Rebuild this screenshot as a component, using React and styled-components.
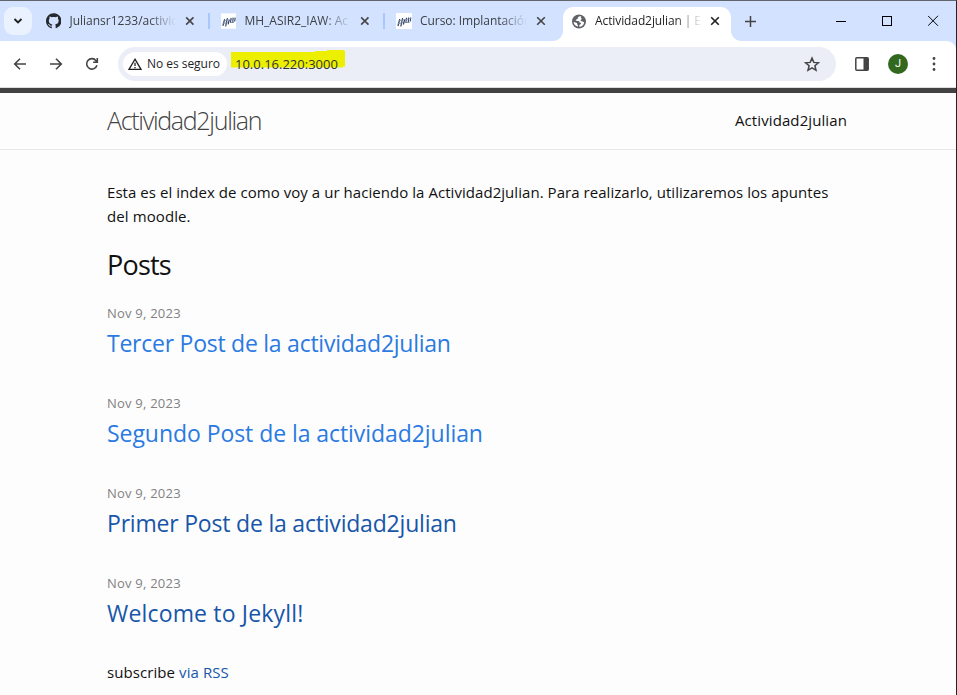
import React from 'react';
import styled, { createGlobalStyle } from 'styled-components';

const Global = createGlobalStyle`
  * { box-sizing: border-box; }
  body { margin: 0; background: #fdfdfd; overflow: hidden; }
`;

const Window = styled.div`
  width: 957px;
  height: 695px;
  display: flex;
  flex-direction: column;
  overflow: hidden;
  border-top: 1px solid #62646c;
  border-right: 1px solid #222;
  background: #fdfdfd;
  font-family: 'Open Sans', 'Noto Sans', sans-serif;
  color: #111;
`;

const TabStrip = styled.div`
  height: 40px;
  flex: none;
  display: flex;
  background: #d3e2ff;
`;

const TabSearch = styled.div`
  width: 28px;
  height: 28px;
  margin: 6px 3px 0 4px;
  border-radius: 9px;
  background: #ebf2ff;
  display: grid;
  place-items: center;
`;

const Tab = styled.div`
  width: 175px;
  height: 40px;
  padding-left: 11px;
  display: flex;
  align-items: center;
`;

const ActiveTab = styled.div`
  position: relative;
  width: 168px;
  height: 34px;
  margin: 6px 0 0 3px;
  padding: 0 0 6px 9px;
  border-radius: 10px 10px 0 0;
  background: #fff;
  display: flex;
  align-items: center;
  &::before, &::after {
    content: '';
    position: absolute;
    bottom: 0;
    width: 10px;
    height: 10px;
  }
  &::before {
    left: -10px;
    background: radial-gradient(circle at 0 0, transparent 9.5px, #fff 10.2px);
  }
  &::after {
    right: -10px;
    background: radial-gradient(circle at 100% 0, transparent 9.5px, #fff 10.2px);
  }
`;

const TabTitle = styled.span`
  flex: none;
  width: ${(p) => (p.$active ? 115 : 116)}px;
  margin: 0 0 0 8px;
  white-space: nowrap;
  font-size: 12px;
  line-height: 20px;
  letter-spacing: ${(p) => p.$track || 0}px;
  color: ${(p) => (p.$active ? '#1f1f1f' : '#3c4043')};
  mask-image: linear-gradient(90deg, #000 80px, transparent 107px);
`;

const Separator = styled.div`
  width: 2px;
  height: 16px;
  margin-left: 13px;
  background: #a8c7fa;
`;

const NewTab = styled.div`
  width: 20px;
  margin-left: 9px;
  display: flex;
  align-items: center;
  justify-content: center;
`;

const WindowControls = styled.div`
  margin-left: auto;
  display: flex;
  align-items: center;
  gap: 35px;
  padding: 0 16px 1px 0;
`;

const Toolbar = styled.div`
  height: 47px;
  flex: none;
  display: flex;
  align-items: center;
  background: #fff;
  border-bottom: 1px solid #dcdcdc;
  border-radius: 0 9px 0 0;
`;

const ToolbarBack = styled.div`
  flex: none;
  background: linear-gradient(#d3e2ff 12px, #fff 12px);
`;

const NavButtons = styled.div`
  width: 118px;
  padding-left: 12px;
  display: flex;
  gap: 20px;
`;

const Omnibox = styled.div`
  width: 718px;
  height: 34px;
  padding: 0 15px 0 5px;
  border-radius: 17px;
  background: #ebeef7;
  display: flex;
  align-items: center;
`;

const SecurityChip = styled.div`
  width: 104px;
  height: 24px;
  padding-left: 5px;
  border-radius: 12px;
  background: #fff;
  display: flex;
  align-items: center;
  gap: 5px;
  white-space: nowrap;
  font-size: 12px;
  line-height: 24px;
  letter-spacing: -0.04px;
  color: #1f1f1f;
`;

const Url = styled.div`
  position: relative;
  width: 114px;
  height: 20px;
  margin: -3px 0 0 4px;
  padding-left: 4px;
  white-space: nowrap;
  font-size: 13px;
  line-height: 23px;
  letter-spacing: 0;
  color: #333;
`;

const Marker = styled.svg`
  position: absolute;
  left: 0;
  top: -4px;
`;

const UrlText = styled.span`
  position: relative;
`;

const Spacer = styled.div`
  flex: 1;
`;

const Actions = styled.div`
  display: flex;
  align-items: center;
  margin-left: 18px;
`;

const Avatar = styled.div`
  width: 20px;
  height: 20px;
  margin: 0 24px 0 18px;
  border-radius: 50%;
  background: #33691e;
  color: #fff;
  display: grid;
  place-items: center;
  font: 11px/20px Roboto, sans-serif;
`;

const SiteHeader = styled.header`
  height: 62px;
  flex: none;
  padding: 0 109px 0 107px;
  border-top: 5px solid #424242;
  border-bottom: 1px solid #e8e8e8;
  display: flex;
  justify-content: space-between;
`;

const SiteTitle = styled.a`
  font-size: 25px;
  font-weight: 300;
  line-height: 54px;
  letter-spacing: -1.3px;
  color: #424242;
`;

const NavLink = styled.a`
  font-size: 15px;
  line-height: 54px;
  letter-spacing: 0.1px;
`;

const Content = styled.main`
  padding: 30px 107px 0;
`;

const Paragraph = styled.p`
  margin: 0 0 15px;
  font-size: 15px;
  line-height: 24px;
  white-space: nowrap;
`;

const Line = styled.span`
  display: block;
  letter-spacing: ${(p) => p.$track}px;
`;

const Heading = styled.h2`
  margin: 0 0 15px;
  font-size: 27px;
  font-weight: 400;
  line-height: 43px;
  letter-spacing: ${(p) => p.$track}px;
`;

const Post = styled.article`
  height: 90px;
`;

const PostDate = styled.div`
  font-size: 13px;
  line-height: 24px;
  letter-spacing: ${(p) => p.$track}px;
  color: #828282;
`;

const PostLink = styled.a`
  display: block;
  font-size: 23px;
  line-height: 36px;
  letter-spacing: ${(p) => p.$track}px;
  color: ${(p) => (p.$visited ? '#1756a9' : '#2a7ae2')};
  white-space: nowrap;
`;

const Subscribe = styled(Paragraph)`
  margin-top: -1px;
  letter-spacing: 0.08px;
`;

const RssLink = styled.a`
  color: #1756a9;
`;

const CloseIcon = ({ color = '#444' }) => (
  <svg width="10" height="10" viewBox="0 0 10 10" stroke={color} strokeWidth="1.6">
    <path d="M1.2 1.2l7.6 7.6M8.8 1.2L1.2 8.8" />
  </svg>
);

const GithubIcon = () => (
  <svg width="16" height="16" viewBox="0 0 16 16" fill="#24292f">
    <path d="M8 0C3.58 0 0 3.58 0 8c0 3.54 2.29 6.53 5.47 7.59.4.07.55-.17.55-.38 0-.19-.01-.82-.01-1.49-2.01.37-2.53-.49-2.69-.94-.09-.23-.48-.94-.82-1.13-.28-.15-.68-.52-.01-.53.63-.01 1.08.58 1.23.82.72 1.21 1.87.87 2.33.66.07-.52.28-.87.51-1.07-1.78-.2-3.64-.89-3.64-3.95 0-.87.31-1.59.82-2.15-.08-.2-.36-1.02.08-2.12 0 0 .67-.21 2.2.82.64-.18 1.32-.27 2-.27s1.36.09 2 .27c1.53-1.04 2.2-.82 2.2-.82.44 1.1.16 1.92.08 2.12.51.56.82 1.27.82 2.15 0 3.07-1.87 3.75-3.65 3.95.29.25.54.73.54 1.48 0 1.07-.01 1.93-.01 2.2 0 .21.15.46.55.38A8.01 8.01 0 0 0 16 8c0-4.42-3.58-8-8-8z" />
  </svg>
);

const SchoolIcon = () => (
  <svg width="16" height="16" viewBox="0 0 16 16" fill="none" stroke="#2b3a5c">
    <rect width="16" height="16" fill="#fff" stroke="none" />
    <path d="M3.800 6.200L2 13M6.600 5L4.800 13.500M8.600 6.500L7.400 11.500" strokeWidth="1.200" />
    <path d="M10.500 4.800L9.800 10M12.600 4.500L12.200 10M14.700 4.500l-.5 4" strokeWidth="1.100" />
    <path d="M2.200 8.200L8 6.700M1.500 10.800l5.500-1.300M9 6.700l6.300-1.300M9.500 9.500h4" stroke="#7d8dac" strokeWidth="0.9" />
  </svg>
);

const GlobeIcon = () => (
  <svg width="15" height="15" viewBox="0 0 15 15">
    <circle cx="7" cy="7.500" r="7" fill="#5f6368" />
    <path d="M9.300 2.300C8 2 6.700 2.500 5.900 3.400c-.5.6.3 1.100-.4 1.600-.8.500-1.700.3-1.700 1.200 0 .7.700.7 1.700.7 1.200 0 2 .4 2.100 1.200.1.700.8.500 1.200.9.600.600-.2 1.200-.8 1.500-.7.400-.3 1.200-1 2.200 2.800.1 5-2 5.200-4.800-.8.400-1.600.2-1.900-.6-.9.200-1.700-.2-1.700-1 0-.7.900-.7 1.200-1.300.3-.7-1-.8-1-1.500 0-.5.500-.8.500-1.200zM1.600 8c1.100.3 2.600.4 3.300 1.100.5.600 0 1.200.6 1.600.6.400.5 1.100.3 1.900C3.500 12.300 1.700 10.400 1.600 8z" fill="#fff" />
  </svg>
);

const posts = [
  { title: 'Tercer Post de la actividad2julian', track: -0.25 },
  { title: 'Segundo Post de la actividad2julian', track: -0.06 },
  { title: 'Primer Post de la actividad2julian', track: -0.2, visited: true },
  { title: 'Welcome to Jekyll!', track: 0.17, visited: true },
];

export default function App() {
  return (
    <>
      <Global />
      <Window>
        <TabStrip>
          <TabSearch>
            <svg width="10" height="8" viewBox="0 0 10 8" fill="none" stroke="#1f1f1f" strokeWidth="1.8">
              <path d="M1.5 2l3.5 3.5L8.5 2" />
            </svg>
          </TabSearch>
          <Tab><GithubIcon /><TabTitle>Juliansr1233/activid</TabTitle><CloseIcon /><Separator /></Tab>
          <Tab><SchoolIcon /><TabTitle>MH_ASIR2_IAW: Ac</TabTitle><CloseIcon /><Separator /></Tab>
          <Tab><SchoolIcon /><TabTitle $track={-0.05}>Curso: Implantación</TabTitle><CloseIcon /></Tab>
          <ActiveTab>
            <GlobeIcon />
            <TabTitle $active $track={-0.1}>Actividad2julian | E</TabTitle>
            <CloseIcon color="#1f1f1f" />
          </ActiveTab>
          <NewTab>
            <svg width="11" height="11" viewBox="0 0 11 11" stroke="#444" strokeWidth="1.5"><path d="M5.5 0v11M0 5.5h11" /></svg>
          </NewTab>
          <WindowControls>
            <svg width="11" height="11" viewBox="0 0 11 11" stroke="#000"><path d="M0 6.5h10" /></svg>
            <svg width="11" height="11" viewBox="0 0 11 11" fill="none" stroke="#000"><rect x="0.5" y="1.5" width="9" height="9" /></svg>
            <svg width="12" height="11" viewBox="0 0 12 11" stroke="#000"><path d="M0 .8l10 10M10 .8L0 10.8" /></svg>
          </WindowControls>
        </TabStrip>

        <ToolbarBack>
          <Toolbar>
            <NavButtons>
              <svg width="16" height="16" viewBox="0 0 16 16" fill="none" stroke="#444" strokeWidth="1.6"><path d="M14 8H3M8 2.7L2.7 8 8 13.3" /></svg>
              <svg width="16" height="16" viewBox="0 0 16 16" fill="none" stroke="#444" strokeWidth="1.6"><path d="M2 8h11M8 2.7L13.3 8 8 13.3" /></svg>
              <svg width="16" height="16" viewBox="0 0 16 16" fill="none" stroke="#444" strokeWidth="1.6"><path d="M12.9 9.2A5.200 5.200 0 1 1 12 4.700L13.300 6M13.300 2v4.200H9.100" /></svg>
            </NavButtons>
            <Omnibox>
              <SecurityChip>
                <svg width="14" height="14" viewBox="0 0 14 14" fill="none" stroke="#1f1f1f" strokeWidth="1.3"><path d="M7 2.2L13 12.3H1zM7 5.8v3.2M7 10v1.200" /></svg>
                No es seguro
              </SecurityChip>
              <Url>
                <Marker width="114" height="19" viewBox="0 0 114 19"><path d="M0 3H84V2H96V1H112L114 2V17.500H112V18.500H0z" fill="#ecf000" /></Marker>
                <UrlText>10.0.16.220:3000</UrlText>
              </Url>
              <Spacer />
              <svg width="17" height="17" viewBox="0 0 17 17" fill="none" stroke="#444" strokeWidth="1.5"><path d="M8 2.100l1.800 4.300 4.600.4-3.500 3 1.100 4.500-4-2.400-4 2.400 1.100-4.500-3.500-3 4.600-.4z" /></svg>
            </Omnibox>
            <Actions>
              <svg width="16" height="16" viewBox="0 0 16 16"><rect x="1.8" y="1.8" width="12.4" height="12.4" rx="1" fill="none" stroke="#444" strokeWidth="1.5" /><path d="M9.5 1.8h4.700v12.400H9.500z" fill="#444" /></svg>
              <Avatar>J</Avatar>
              <svg width="4" height="14" viewBox="0 0 4 14" fill="#444"><circle cx="2" cy="1.5" r="1.4" /><circle cx="2" cy="7" r="1.4" /><circle cx="2" cy="12.5" r="1.4" /></svg>
            </Actions>
          </Toolbar>
        </ToolbarBack>

        <SiteHeader>
          <SiteTitle>Actividad2julian</SiteTitle>
          <NavLink>Actividad2julian</NavLink>
        </SiteHeader>
        <Content>
          <Paragraph>
            <Line $track={0.05}>Esta es el index de como voy a ur haciendo la Actividad2julian. Para realizarlo, utilizaremos los apuntes</Line>
            <Line $track={0.1}>del moodle.</Line>
          </Paragraph>
          <Heading $track={-0.8}>Posts</Heading>
          {posts.map((post) => (
            <Post key={post.title}>
              <PostDate $track={0.22}>Nov 9, 2023</PostDate>
              <PostLink $track={post.track} $visited={post.visited}>{post.title}</PostLink>
            </Post>
          ))}
          <Subscribe>
            subscribe <RssLink>via RSS</RssLink>
          </Subscribe>
        </Content>
      </Window>
    </>
  );
}
